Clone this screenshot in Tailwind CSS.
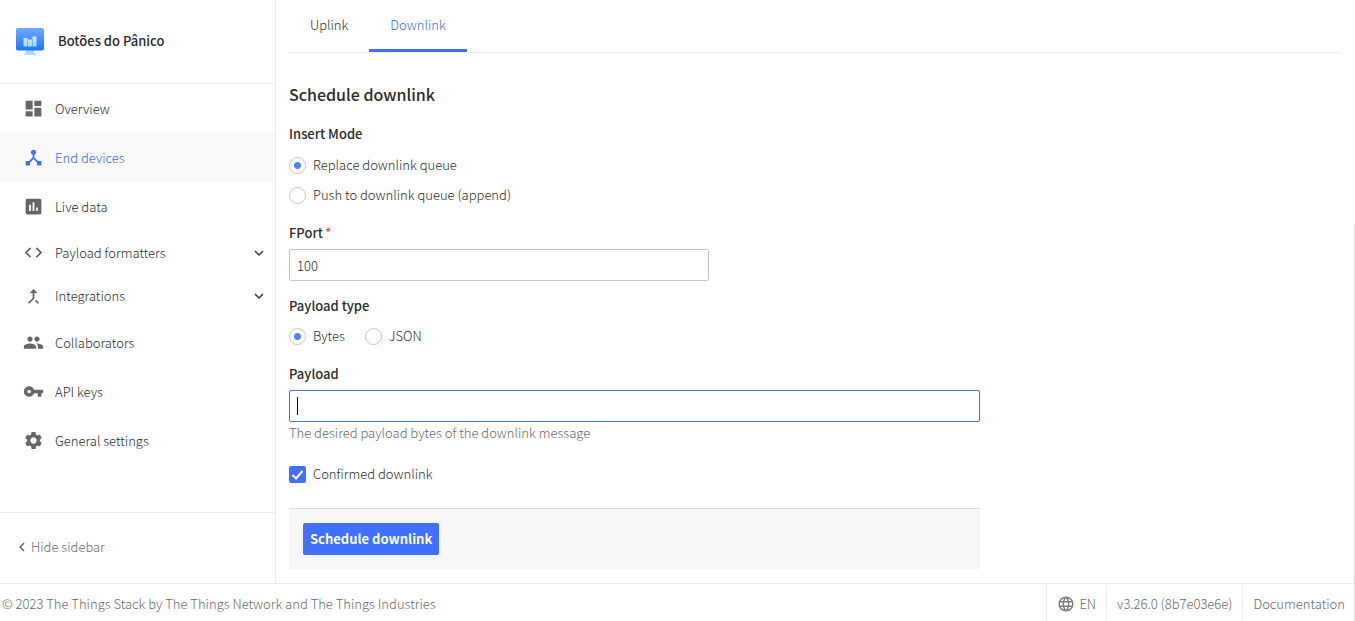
<!DOCTYPE html>
<html lang="en">
<head>
<meta charset="utf-8">
<meta name="viewport" content="width=device-width, initial-scale=1">
<title>Schedule downlink</title>
<script src="https://cdn.jsdelivr.net/npm/@tailwindcss/browser@4"></script>
</head>
<body class="relative flex min-h-screen flex-col bg-white font-['Noto_Sans_CJK_SC','Noto_Sans',sans-serif] text-[13px] leading-5 font-light text-[#2b2b2b]">
<div class="flex flex-1">
  <aside class="flex w-[276px] shrink-0 flex-col border-r border-[#eaeaea]">
    <header class="flex h-21 items-center gap-3.5 border-b border-[#eaeaea] pb-0.5 pl-4 font-medium text-[#2b2b2b]">
      <svg class="size-7" viewBox="0 0 28 28" aria-hidden="true">
        <defs>
          <linearGradient id="screen" x1="0" y1="0" x2="0" y2="1"><stop offset="0" stop-color="#74a7fc"/><stop offset="1" stop-color="#1b78fb"/></linearGradient>
          <linearGradient id="bars" x1="0" y1="0" x2="0" y2="1"><stop offset="0" stop-color="#d5edff"/><stop offset="1" stop-color="#a5d4fc"/></linearGradient>
        </defs>
        <path d="M10 23h8v3h1.500v2h-11v-2H10z" fill="#aadcf8"/>
        <rect y="1" width="28" height="22.500" rx="2" fill="url(#screen)"/>
        <path d="M7.500 11h4v8.500h-4zM12 12.500h4v7h-4zM16.500 9.500h4v10h-4z" fill="url(#bars)"/>
      </svg>
      <span>Botões do Pânico</span>
    </header>
    <nav class="flex flex-1 flex-col">
      <a href="#" class="flex h-[49px] items-center gap-[11px] pl-[23px]">
        <svg class="size-[21px] fill-[#666]" viewBox="0 0 24 24" aria-hidden="true"><path d="M3 13h8V3H3v10zm0 8h8v-6H3v6zm10 0h8V11h-8v10zm0-18v6h8V3h-8z"/></svg>Overview</a>
      <a href="#" class="flex h-[49px] items-center gap-[11px] bg-[#f9f9f9] pl-[23px] text-[#3d6ae4]" aria-current="page">
        <svg class="size-[21px] fill-[#4070f4]" viewBox="0 0 24 24" aria-hidden="true"><path d="M17 16l-4-4V8.820C14.160 8.400 15 7.300 15 6c0-1.660-1.340-3-3-3S9 4.340 9 6c0 1.300.840 2.400 2 2.820V12l-4 4H3v5h5v-3.050l4-4.200 4 4.200V21h5v-5h-4z"/></svg>End devices</a>
      <a href="#" class="flex h-[49px] items-center gap-[11px] pl-[23px]">
        <svg class="size-[21px] fill-[#666]" viewBox="0 0 24 24" aria-hidden="true"><path d="M19 3H5c-1.100 0-2 .9-2 2v14c0 1.100.9 2 2 2h14c1.100 0 2-.9 2-2V5c0-1.100-.9-2-2-2zM9 17H7v-7h2v7zm4 0h-2V7h2v10zm4 0h-2v-4h2v4z"/></svg>Live data</a>
      <button type="button" class="flex h-[43px] items-center gap-[11px] pr-[7px] pl-[23px]" aria-expanded="false">
        <svg class="size-[21px] fill-[#666]" viewBox="0 0 24 24" aria-hidden="true"><path d="M9.400 16.600L4.800 12l4.600-4.600L8 6l-6 6 6 6 1.400-1.400zm5.200 0l4.600-4.600-4.600-4.600L16 6l6 6-6 6-1.400-1.400z"/></svg>Payload formatters
        <svg class="ml-auto size-[18px] fill-[#363636]" viewBox="0 0 24 24" aria-hidden="true"><path d="M7.410 8.590L12 13.170l4.590-4.580L18 10l-6 6-6-6z"/></svg></button>
      <button type="button" class="flex h-11 items-center gap-[11px] pr-[7px] pl-[23px]" aria-expanded="false">
        <svg class="size-[21px] fill-[#666]" viewBox="0 0 24 24" aria-hidden="true"><path d="M17 20.410L18.410 19 15 15.590 13.590 17 17 20.410zM7.500 8H11v5.590L5.590 19 7 20.410l6-6V8h3.500L12 3.500 7.500 8z"/></svg>Integrations
        <svg class="ml-auto size-[18px] fill-[#363636]" viewBox="0 0 24 24" aria-hidden="true"><path d="M7.410 8.590L12 13.170l4.590-4.580L18 10l-6 6-6-6z"/></svg></button>
      <a href="#" class="flex h-[49px] items-center gap-[11px] pl-[23px]">
        <svg class="size-[21px] fill-[#666]" viewBox="0 0 24 24" aria-hidden="true"><path d="M16 11c1.660 0 2.990-1.340 2.990-3S17.660 5 16 5c-1.660 0-3 1.340-3 3s1.340 3 3 3zm-8 0c1.660 0 2.990-1.340 2.990-3S9.660 5 8 5C6.340 5 5 6.340 5 8s1.340 3 3 3zm0 2c-2.330 0-7 1.170-7 3.500V19h14v-2.500c0-2.330-4.670-3.500-7-3.500zm8 0c-.29 0-.62.020-.97.050 1.160.84 1.970 1.970 1.970 3.450V19h6v-2.500c0-2.330-4.670-3.500-7-3.500z"/></svg>Collaborators</a>
      <a href="#" class="flex h-[49px] items-center gap-[11px] pl-[23px]">
        <svg class="size-[21px] fill-[#666]" viewBox="0 0 24 24" aria-hidden="true"><path d="M12.650 10C11.830 7.670 9.610 6 7 6c-3.310 0-6 2.690-6 6s2.690 6 6 6c2.610 0 4.830-1.670 5.650-4H17v4h4v-4h2v-4H12.650zM7 14c-1.100 0-2-.9-2-2s.9-2 2-2 2 .9 2 2-.9 2-2 2z"/></svg>API keys</a>
      <a href="#" class="flex h-[49px] items-center gap-[11px] pl-[23px]">
        <svg class="size-[21px] fill-[#666]" viewBox="0 0 24 24" aria-hidden="true"><path d="M19.140 12.940c.04-.3.060-.61.060-.94 0-.32-.02-.64-.07-.94l2.030-1.580c.18-.14.230-.41.120-.61l-1.920-3.320c-.12-.22-.37-.29-.59-.22l-2.390.96c-.5-.38-1.030-.7-1.620-.94l-.36-2.540c-.04-.24-.24-.41-.48-.41h-3.840c-.24 0-.43.170-.47.410l-.36 2.540c-.59.240-1.130.57-1.620.94l-2.390-.96c-.22-.08-.47 0-.59.220L2.740 8.870c-.12.210-.08.470.12.610l2.030 1.580c-.05.300-.09.630-.09.940s.02.640.07.940l-2.030 1.580c-.18.140-.23.410-.12.610l1.920 3.320c.12.220.37.290.59.220l2.390-.96c.5.380 1.030.7 1.620.94l.36 2.540c.05.240.24.410.48.410h3.840c.24 0 .44-.17.470-.41l.36-2.540c.59-.24 1.130-.56 1.620-.94l2.390.96c.22.080.47 0 .59-.22l1.920-3.320c.12-.22.070-.47-.12-.61l-2.010-1.580zM12 15.600c-1.980 0-3.600-1.620-3.600-3.600s1.620-3.600 3.600-3.600 3.600 1.620 3.600 3.600-1.620 3.600-3.600 3.600z"/></svg>General settings</a>
    </nav>
    <button type="button" class="flex h-[71px] items-center border-t border-[#eaeaea] pb-[3px] pl-[13px] text-[#6a6a6a]">
      <svg class="size-[18px] fill-[#666]" viewBox="0 0 24 24" aria-hidden="true"><path d="M15.410 7.410L14 6l-6 6 6 6 1.410-1.410L10.830 12z"/></svg>Hide sidebar</button>
  </aside>

  <main class="min-w-0 flex-1 pr-[15px] pl-[13px]">
    <nav class="flex h-[53px] items-end border-b border-[#eaeaea]">
      <a href="#" class="flex h-[52px] items-center px-[21px] pb-0.5">Uplink</a>
      <a href="#" class="flex h-[52px] items-center border-b-3 border-[#4070e8] px-[21px] pt-px text-[#3d6ae4]" aria-current="page">Downlink</a>
    </nav>
    <form class="max-w-[691px] pt-[31px]">
      <h1 class="text-base leading-5 font-medium text-[#2b2b2b]">Schedule downlink</h1>
      <fieldset class="mt-5">
        <legend class="mb-1.5 font-medium">Insert Mode</legend>
        <label class="flex h-[30px] items-center gap-[7px]"><input type="radio" name="mode" checked class="size-[17px] appearance-none rounded-full border border-[#c4c4c4] bg-white checked:bg-[radial-gradient(circle,#5282f8_3px,transparent_4px)]">Replace downlink queue</label>
        <label class="flex h-[30px] items-center gap-[7px]"><input type="radio" name="mode" class="size-[17px] appearance-none rounded-full border border-[#c4c4c4] bg-white">Push to downlink queue (append)</label>
      </fieldset>
      <div class="mt-[13px]">
        <label for="fport" class="block font-medium">FPort<span class="ml-0.5 text-[#f04a4a]">*</span></label>
        <input id="fport" type="text" value="100" class="mt-1.5 block h-8 w-full max-w-[420px] rounded-xs border border-[#c4c4c4] px-[7px]">
      </div>
      <fieldset class="mt-[15px]">
        <legend class="mb-[5px] font-medium">Payload type</legend>
        <div class="flex gap-5">
          <label class="flex h-[30px] items-center gap-[7px]"><input type="radio" name="type" checked class="size-[17px] appearance-none rounded-full border border-[#c4c4c4] bg-white checked:bg-[radial-gradient(circle,#5282f8_3px,transparent_4px)]">Bytes</label>
          <label class="flex h-[30px] items-center gap-[7px]"><input type="radio" name="type" class="size-[17px] appearance-none rounded-full border border-[#c4c4c4] bg-white">JSON</label>
        </div>
      </fieldset>
      <div class="mt-[13px]">
        <label for="payload" class="block font-medium">Payload</label>
        <div class="relative mt-1.5">
          <input id="payload" type="text" aria-describedby="payload-help" class="block h-8 w-full rounded-xs border border-[#4a75bd] px-[7px] caret-transparent outline-none">
          <span class="absolute top-[7px] left-2 h-[18px] w-px bg-black"></span>
        </div>
        <p id="payload-help" class="mt-px text-[#6a6a6a]">The desired payload bytes of the downlink message</p>
      </div>
      <label class="mt-4 flex h-[30px] items-center gap-[7px]">
        <span class="relative flex">
          <input type="checkbox" checked class="size-[17px] appearance-none rounded-xs bg-[#3f70ff]">
          <svg class="pointer-events-none absolute inset-0 size-[17px]" viewBox="0 0 17 17" fill="none" stroke="#fff" stroke-width="2" aria-hidden="true"><path d="M3.500 9l3.500 3.500 6.500-7.500"/></svg>
        </span>Confirmed downlink</label>
      <div class="mt-[19px] border-t border-[#dcdcdc] bg-[#f7f7f7] p-3.5">
        <button type="submit" class="flex h-8 items-center rounded-xs bg-[#3f70ff] px-[7px] font-bold text-white">Schedule downlink</button>
      </div>
    </form>
  </main>
</div>
<footer class="flex h-[38px] items-stretch border-t border-[#eaeaea] text-[#6a6a6a]">
  <span class="flex flex-1 items-center pt-0.5 pl-0.5">© 2023 The Things Stack by The Things Network and The Things Industries</span>
  <button type="button" class="flex items-center gap-1 border-l border-[#eaeaea] px-2.5 pt-0.5">
    <svg class="size-[18px] fill-[#7d7d7d]" viewBox="0 0 24 24" aria-hidden="true"><path d="M11.990 2C6.470 2 2 6.480 2 12s4.470 10 9.990 10C17.520 22 22 17.520 22 12S17.520 2 11.990 2zm6.930 6h-2.950c-.32-1.250-.78-2.450-1.380-3.560 1.840.63 3.370 1.910 4.330 3.560zM12 4.040c.83 1.200 1.480 2.530 1.910 3.960h-3.820c.43-1.430 1.080-2.760 1.910-3.960zM4.260 14C4.100 13.360 4 12.690 4 12s.1-1.360.26-2h3.380c-.08.660-.14 1.320-.14 2 0 .68.060 1.340.14 2H4.260zm.82 2h2.950c.32 1.250.78 2.450 1.380 3.560-1.840-.63-3.370-1.900-4.330-3.560zm2.950-8H5.080c.96-1.660 2.490-2.930 4.330-3.560C8.810 5.550 8.350 6.750 8.030 8zM12 19.960c-.83-1.200-1.480-2.530-1.910-3.960h3.820c-.43 1.430-1.080 2.760-1.910 3.960zM14.340 14H9.660c-.09-.66-.16-1.320-.16-2 0-.68.070-1.350.16-2h4.680c.09.650.16 1.320.16 2 0 .68-.07 1.340-.16 2zm.25 5.560c.6-1.110 1.060-2.310 1.380-3.560h2.950c-.96 1.650-2.490 2.930-4.330 3.560zM16.360 14c.08-.66.140-1.320.14-2 0-.68-.06-1.340-.14-2h3.380c.16.640.26 1.310.26 2s-.1 1.360-.26 2h-3.380z"/></svg>EN</button>
  <span class="flex items-center border-l border-[#eaeaea] px-2.5 pt-0.5">v3.26.0 (8b7e03e6e)</span>
  <a href="#" class="flex items-center border-l border-[#eaeaea] px-2.5 pt-0.5">Documentation</a>
</footer>
<div class="absolute top-56 right-0 bottom-0 w-px bg-[#dedede]"></div>
</body>
</html>
